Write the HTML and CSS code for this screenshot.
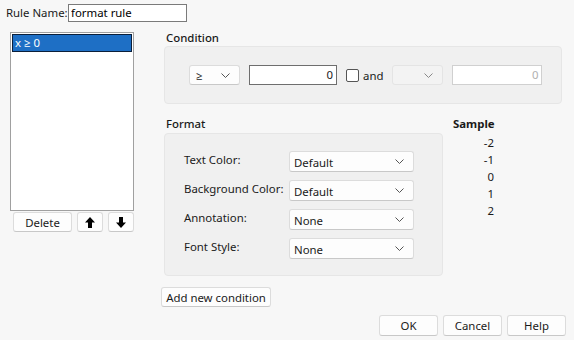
FILE: index.html
```html
<!DOCTYPE html>
<html>
<head>
    <title>Format Rule</title>
    <link rel="stylesheet" href="styles.css">
</head>
<body>
    <div id="dialog">
        <div class="name-row">
            <label>Rule Name:</label>
            <input type="text" class="name-input" value="format rule">
        </div>

        <div class="main">
            <div class="left">
                <div class="rule-list">
                    <div class="rule-item selected">x &ge; 0</div>
                </div>
                <div class="list-buttons">
                    <button class="btn delete">Delete</button>
                    <button class="btn arrow">
                        <svg width="10" height="11" viewBox="0 0 10 11"><path d="M5 0 L10 5.5 L7 5.5 L7 11 L3 11 L3 5.5 L0 5.5 Z" fill="#000"/></svg>
                    </button>
                    <button class="btn arrow">
                        <svg width="10" height="11" viewBox="0 0 10 11"><path d="M5 11 L10 5.5 L7 5.5 L7 0 L3 0 L3 5.5 L0 5.5 Z" fill="#000"/></svg>
                    </button>
                </div>
            </div>

            <div class="right">
                <div class="section-title">Condition</div>
                <div class="panel condition">
                    <div class="combo small">
                        <span class="op">&ge;</span>
                        <svg class="chev" width="9" height="5" viewBox="0 0 9 5"><path d="M0.5 0.5 L4.5 4.5 L8.5 0.5" fill="none" stroke="#555" stroke-width="1"/></svg>
                    </div>
                    <div class="num-input">0</div>
                    <span class="check"></span>
                    <span class="and">and</span>
                    <div class="combo small disabled">
                        <span class="op"></span>
                        <svg class="chev" width="9" height="5" viewBox="0 0 9 5"><path d="M0.5 0.5 L4.5 4.5 L8.5 0.5" fill="none" stroke="#888" stroke-width="1"/></svg>
                    </div>
                    <div class="num-input disabled">0</div>
                </div>

                <div class="format-row">
                    <div class="format-col">
                        <div class="section-title">Format</div>
                        <div class="panel format">
                            <div class="field">
                                <span class="field-label">Text Color:</span>
                                <div class="combo wide"><span>Default</span><svg class="chev" width="9" height="5" viewBox="0 0 9 5"><path d="M0.5 0.5 L4.5 4.5 L8.5 0.5" fill="none" stroke="#555" stroke-width="1"/></svg></div>
                            </div>
                            <div class="field">
                                <span class="field-label">Background Color:</span>
                                <div class="combo wide"><span>Default</span><svg class="chev" width="9" height="5" viewBox="0 0 9 5"><path d="M0.5 0.5 L4.5 4.5 L8.5 0.5" fill="none" stroke="#555" stroke-width="1"/></svg></div>
                            </div>
                            <div class="field">
                                <span class="field-label">Annotation:</span>
                                <div class="combo wide"><span>None</span><svg class="chev" width="9" height="5" viewBox="0 0 9 5"><path d="M0.5 0.5 L4.5 4.5 L8.5 0.5" fill="none" stroke="#555" stroke-width="1"/></svg></div>
                            </div>
                            <div class="field">
                                <span class="field-label">Font Style:</span>
                                <div class="combo wide"><span>None</span><svg class="chev" width="9" height="5" viewBox="0 0 9 5"><path d="M0.5 0.5 L4.5 4.5 L8.5 0.5" fill="none" stroke="#555" stroke-width="1"/></svg></div>
                            </div>
                        </div>
                    </div>
                    <div class="sample">
                        <div class="sample-title">Sample</div>
                        <div class="sample-values">
                            <span>-2</span>
                            <span>-1</span>
                            <span>0</span>
                            <span>1</span>
                            <span>2</span>
                        </div>
                    </div>
                </div>

                <button class="btn add">Add new condition</button>
            </div>
        </div>

        <div class="footer">
            <button class="btn action">OK</button>
            <button class="btn action">Cancel</button>
            <button class="btn action">Help</button>
        </div>
    </div>
</body>
</html>
```

FILE: styles.css
```css
body {
    margin: 0;
    background-color: #f7f7f7;
    font-family: "Noto Sans", "Open Sans", sans-serif;
    font-size: 11.4px;
    color: #1a1a1a;
}
#dialog {
    width: 574px;
    height: 340px;
}
.name-row {
    display: flex;
    align-items: center;
    height: 19px;
    padding: 3px 0 0 6px;
}
.name-row label {
    width: 62px;
}
.name-input {
    width: 113px;
    height: 16px;
    border: 1px solid #7a7a7a;
    padding: 0 2px;
    font-family: inherit;
    font-size: 11.4px;
    background: #fff;
    outline: none;
}
.main {
    display: flex;
    margin-top: 10px;
}
.left {
    width: 154px;
    padding-left: 10px;
}
.rule-list {
    width: 120px;
    height: 175px;
    background: #fff;
    border: 1px solid #a0a0a0;
    padding: 1px;
}
.rule-item {
    height: 16px;
    line-height: 16px;
    padding-left: 2px;
    background: #1e6fc5;
    color: #fff;
    border: 1px solid #0b1f3a;
}
.list-buttons {
    display: flex;
    gap: 5px;
    padding-left: 3px;
    margin-top: 1px;
}
.btn {
    font-family: inherit;
    font-size: 11.4px;
    background: #fdfdfd;
    border: 1px solid #dcdcdc;
    border-bottom-color: #c8c8c8;
    border-radius: 3px;
    color: #1a1a1a;
    padding: 0;
    height: 20px;
}
.delete {
    width: 59px;
}
.arrow {
    width: 26px;
    display: flex;
    align-items: center;
    justify-content: center;
}
.right {
    width: 398px;
    padding-top: 2px;
}
.section-title {
    font-weight: 500;
    margin-left: 2px;
    height: 15px;
    line-height: 15px;
    margin-top: -4px;
}
.panel {
    background: #f0f0f0;
    border: 1px solid #e6e6e6;
    border-radius: 4px;
}
.condition {
    height: 56px;
    display: flex;
    align-items: center;
    padding-left: 24px;
    margin-top: 1px;
}
.combo {
    display: flex;
    align-items: center;
    justify-content: space-between;
    background: #fdfdfd;
    border: 1px solid #dcdcdc;
    border-bottom-color: #c8c8c8;
    border-radius: 3px;
    box-sizing: border-box;
}
.combo.small {
    width: 51px;
    height: 20px;
    padding: 0 9px 0 6px;
}
.combo.disabled {
    background: #f3f3f3;
    border-color: #e4e4e4;
    margin-left: 9px;
}
.num-input {
    width: 83px;
    height: 18px;
    margin-left: 9px;
    background: #fff;
    border: 1px solid #6e6e6e;
    text-align: right;
    line-height: 18px;
    padding-right: 3px;
}
.num-input.disabled {
    border-color: #d0d0d0;
    color: #b0b0b0;
    width: 85px;
}
.check {
    width: 11px;
    height: 11px;
    border: 1px solid #555;
    border-radius: 2px;
    background: #fff;
    margin-left: 9px;
}
.and {
    margin-left: 4px;
}
.format-row {
    display: flex;
    margin-top: 16px;
}
.format-col {
    width: 279px;
}
.format {
    height: 143px;
    padding-top: 17px;
    box-sizing: border-box;
    margin-top: 2px;
}
.field {
    display: flex;
    align-items: center;
    height: 21px;
    margin-bottom: 8px;
    padding-left: 19px;
}
.field-label {
    width: 105px;
    margin-top: -4px;
}
.combo.wide {
    width: 125px;
    height: 21px;
    padding: 0 9px 0 4px;
}
.combo.wide span {
    margin-top: 2px;
}
.sample {
    padding-left: 10px;
}
.sample-title {
    font-weight: 700;
    height: 15px;
    line-height: 15px;
    margin-top: -4px;
}
.sample-values {
    display: flex;
    flex-direction: column;
    align-items: flex-end;
    width: 41px;
    margin-top: 3px;
}
.sample-values span {
    height: 17px;
    line-height: 17px;
}
.add {
    width: 110px;
    margin-top: 11px;
    margin-left: -3px;
}
.footer {
    display: flex;
    justify-content: flex-end;
    gap: 5px;
    padding-right: 8px;
    margin-top: 8px;
}
.action {
    width: 59px;
    height: 21px;
}
```
